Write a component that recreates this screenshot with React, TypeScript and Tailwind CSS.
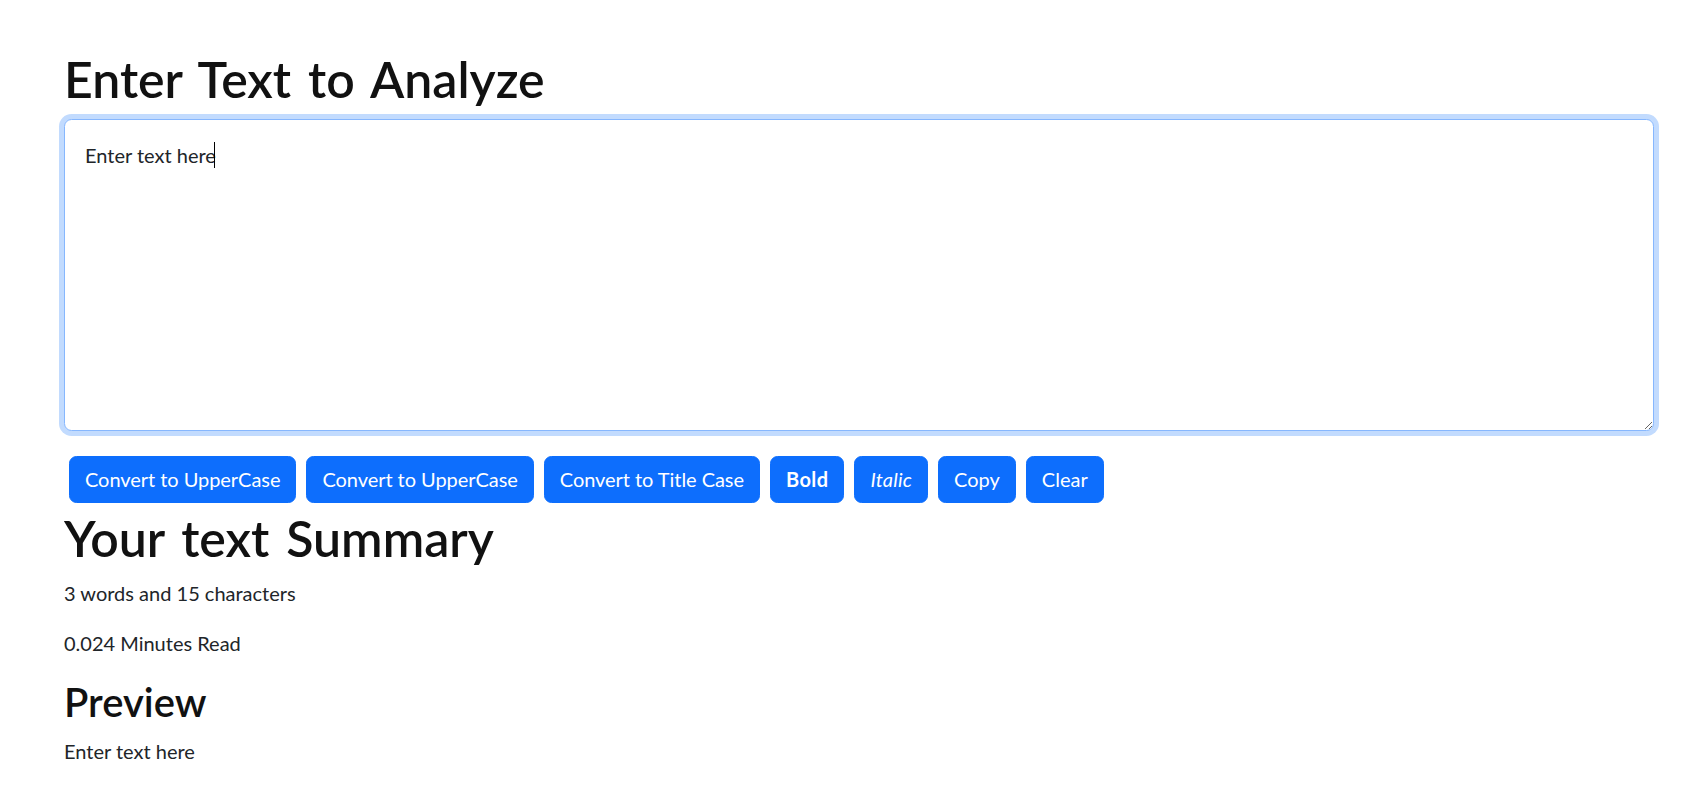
import React from "react";

const btn =
  "inline-block px-[15px] py-[7.5px] text-[20px] leading-[30px] border-[1.25px] border-[#0d6efd] bg-[#0d6efd] text-white rounded-[7.5px] whitespace-nowrap";

export default function App() {
  const text = "Enter text here";
  const words = text.split(/\s+/).filter((w) => w.length > 0).length;
  return (
    <div
      className="min-h-screen bg-white text-[#212529] pt-[48.5px] pl-[64px] pr-[51px]"
      style={{ fontFamily: "Lato, 'Liberation Sans', sans-serif" }}
    >
      <h1 className="text-[50px] leading-[60px] font-semibold mb-[10px] text-[#111] [word-spacing:4.5px]">Enter Text to Analyze</h1>
      <div className="relative mb-[20px]">
        <textarea
          className="block w-full h-[312px] border-[1.25px] border-[#86b7fe] rounded-[7.5px] p-[20px] text-[20px] leading-[30px] text-[#212529] bg-white outline-none shadow-[0_0_0_5px_rgba(13,110,253,0.25)]"
          style={{ fontFamily: "Lato, 'Liberation Sans', sans-serif" }}
          defaultValue={text}
          readOnly
        />
        <div className="pointer-events-none absolute inset-0 border-[1.25px] border-transparent p-[20px] text-[20px] leading-[30px]">
          <span className="text-transparent">{text}</span>
          <span className="inline-block align-top relative top-[2px] left-[-2px] w-[1px] h-[26px] bg-black" />
        </div>
      </div>
      <div className="flex flex-wrap gap-x-[10px] px-[5px] py-[5px]">
        <button className={`${btn} tracking-[-0.05px]`}>Convert to UpperCase</button>
        <button className={`${btn} tracking-[-0.05px]`}>Convert to UpperCase</button>
        <button className={`${btn} tracking-[-0.05px]`}>Convert to Title Case</button>
        <button className={`${btn} font-bold tracking-[0.4px]`}>Bold</button>
        <button className={`${btn} italic tracking-[0.2px]`}>Italic</button>
        <button className={btn}>Copy</button>
        <button className={btn}>Clear</button>
      </div>
      <h1 className="text-[50px] leading-[60px] font-semibold mb-[10px] text-[#111] [word-spacing:4.5px]">Your text Summary</h1>
      <p className="text-[20px] leading-[30px] mb-[20px]">
        {words} words and {text.length} characters
      </p>
      <p className="text-[20px] leading-[30px] mb-[20px]">0.024 Minutes Read</p>
      <h2 className="text-[40px] leading-[48px] font-semibold mb-[10px] text-[#111]">Preview</h2>
      <p className="text-[20px] leading-[30px] mb-[20px]">{text}</p>
    </div>
  );
}
